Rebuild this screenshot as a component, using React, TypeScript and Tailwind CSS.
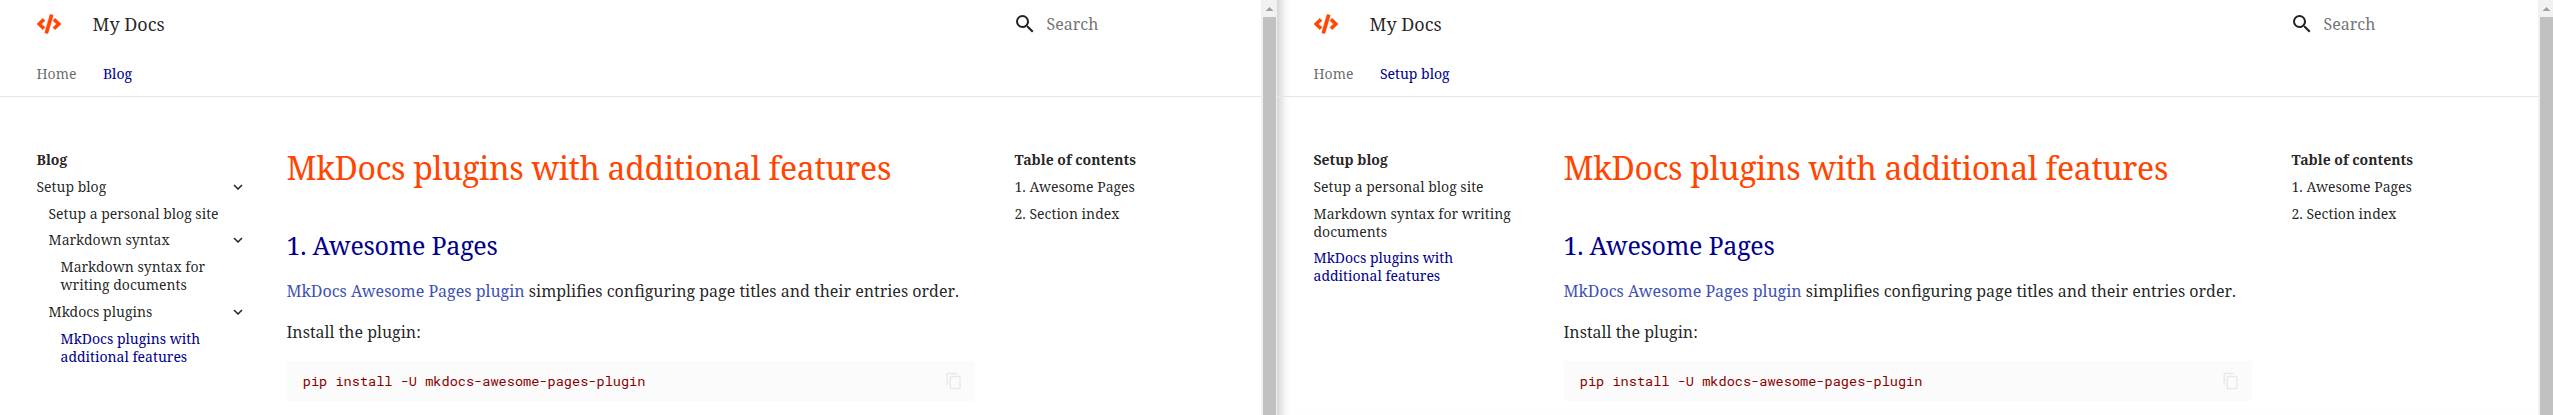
type Item = { label: string; level?: number; open?: boolean; active?: boolean };

type PanelProps = { section: string; items: Item[] };

function Logo() {
  return (
    <svg viewBox="0 0 640 512" className="h-6 w-6 fill-[#ff4500] stroke-[#ff4500] stroke-[12]">
      <path d="m278.900 511.500-61-17.700c-6.400-1.800-10-8.500-8.200-14.900L346.200 8.700c1.800-6.400 8.500-10 14.900-8.200l61 17.700c6.400 1.800 10 8.500 8.200 14.900L293.800 503.300c-1.900 6.400-8.500 10.100-14.900 8.200zm-114-112.200 43.500-46.400c4.600-4.900 4.300-12.700-.8-17.200L117 256l90.600-79.700c5.100-4.500 5.500-12.300.8-17.200l-43.500-46.400c-4.500-4.800-12.100-5.100-17-.5L3.800 247.200c-5.100 4.700-5.100 12.800 0 17.500l144.100 135.100c4.900 4.600 12.500 4.400 17-.5zm327.200.6 144.100-135.100c5.100-4.700 5.100-12.800 0-17.500L492.100 112.100c-4.800-4.500-12.400-4.300-17 .5L431.600 159c-4.600 4.900-4.300 12.700.8 17.200L523 256l-90.600 79.700c-5.100 4.500-5.500 12.300-.8 17.200l43.500 46.400c4.500 4.900 12.100 5.100 17 .6z" />
    </svg>
  );
}

function Header({ section }: { section: string }) {
  return (
    <header className="h-[97px] border-b border-[#e6e6e6]">
      <div className="flex h-12 items-center pl-[37px] text-[18px] text-black/87">
        <Logo />
        <span className="ml-[31.500px] grow">My Docs</span>
        <div className="flex w-[248px] items-center">
          <svg viewBox="0 0 24 24" className="h-6 w-6 fill-black/87">
            <path d="M9.500 3A6.500 6.500 0 0 1 16 9.500c0 1.610-.590 3.090-1.560 4.230l.270.270h.790l5 5-1.500 1.500-5-5v-.790l-.270-.270A6.516 6.516 0 0 1 9.500 16 6.500 6.500 0 0 1 3 9.500 6.500 6.500 0 0 1 9.500 3m0 2C7 5 5 7 5 9.500S7 14 9.500 14 14 12 14 9.500 12 5 9.500 5Z" />
          </svg>
          <span className="ml-[9.500px] text-base text-[#757575]">Search</span>
        </div>
      </div>
      <nav className="flex h-12 items-center gap-[26.500px] pt-[3px] pl-[36.5px] text-sm">
        <a className="text-black/60">Home</a>
        <a className="text-[#00008b]">{section}</a>
      </nav>
    </header>
  );
}

function Chevron() {
  return (
    <svg viewBox="0 0 24 24" className="h-[18px] w-[18px] shrink-0 rotate-90 fill-black/87">
      <path d="M8.590 16.580 13.170 12 8.590 7.410 10 6l6 6-6 6-1.410-1.420Z" />
    </svg>
  );
}

const indents = ["pl-0", "pl-3", "pl-6"];

function Sidebar({ section, items }: PanelProps) {
  return (
    <nav className="w-[210px] pt-[54.1px] text-sm leading-[18px] text-black/87">
      <div className="font-bold">{section}</div>
      <ul>
        {items.map((item) => (
          <li key={item.label} className={`mt-[8.75px] flex items-center justify-between ${indents[item.level ?? 0]}`}>
            <span className={item.active ? "max-w-[160px] text-[#00008b]" : ""}>{item.label}</span>
            {item.open && <Chevron />}
          </li>
        ))}
      </ul>
    </nav>
  );
}

function Article() {
  return (
    <article className="ml-10 w-[688px] pt-[50px] text-base leading-[25.6px] text-black/87">
      <h1 className="text-[32px] leading-[41.6px] tracking-[-0.01em] text-[#ff4500]">MkDocs plugins with additional features</h1>
      <h2 className="mt-[39px] text-[25px] leading-[35px] tracking-[-0.01em] text-[#00008b]">1. Awesome Pages</h2>
      <p className="mt-4">
        <a className="text-[#4051b5]">MkDocs Awesome Pages plugin</a> simplifies configuring page titles and their entries{" "}
        <span className="[font-kerning:none]">order.</span>
      </p>
      <p className="mt-[15.4px]">Install the plugin:</p>
      <div className="mt-4 flex h-10 items-center justify-between rounded-xs bg-[#fbfbfb] pr-[11.500px] pl-4">
        <code className="pt-0.5 pl-[0.3px] font-['Roboto_Mono','DejaVu_Sans_Mono',monospace] text-[13.6px] text-[#8b0000]">pip install -U mkdocs-awesome-pages-plugin</code>
        <svg viewBox="0 0 24 24" className="h-[18px] w-[18px] fill-black/7">
          <path d="M19 21H8V7h11m0-2H8a2 2 0 0 0-2 2v14a2 2 0 0 0 2 2h11a2 2 0 0 0 2-2V7a2 2 0 0 0-2-2m-3-4H4a2 2 0 0 0-2 2v14h2V3h12V1Z" />
        </svg>
      </div>
    </article>
  );
}

function Contents() {
  return (
    <nav className="ml-10 pt-[54.1px] text-sm leading-[18px] text-black/87">
      <div className="font-bold">Table of contents</div>
      <div className="mt-[8.75px]">1. Awesome Pages</div>
      <div className="mt-[8.75px]">2. Section index</div>
    </nav>
  );
}

function Scrollbar() {
  return (
    <div className="flex w-4 shrink-0 flex-col items-center bg-[#f1f1f1]">
      <div className="flex h-[17px] items-center pt-px">
        <svg viewBox="0 0 7 4" className="ml-px h-1 w-[7px] fill-[#a3a3a3]">
          <path d="M0 4V3h1V2h1V1h1V0h1v1h1v1h1v1h1v1Z" />
        </svg>
      </div>
      <div className="ml-px w-[13px] grow bg-[#c1c1c1]" />
    </div>
  );
}

function Panel({ section, items }: PanelProps) {
  return (
    <>
      <div className="w-[1261px] shrink-0">
        <Header section={section} />
        <main className="flex pl-[36.500px]">
          <Sidebar section={section} items={items} />
          <Article />
          <Contents />
        </main>
      </div>
      <Scrollbar />
    </>
  );
}

const blogItems: Item[] = [
  { label: "Setup blog", open: true },
  { label: "Setup a personal blog site", level: 1 },
  { label: "Markdown syntax", level: 1, open: true },
  { label: "Markdown syntax for writing documents", level: 2 },
  { label: "Mkdocs plugins", level: 1, open: true },
  { label: "MkDocs plugins with additional features", level: 2, active: true },
];

const setupItems: Item[] = [
  { label: "Setup a personal blog site" },
  { label: "Markdown syntax for writing documents" },
  { label: "MkDocs plugins with additional features", active: true },
];

export default function App() {
  return (
    <div className="flex h-[415px] w-[2553px] overflow-hidden bg-white font-['Noto_Serif','Liberation_Serif',serif]">
      <Panel section="Blog" items={blogItems} />
      <div className="flex shadow-[inset_12px_0_10px_-8px_rgba(0,0,0,0.2)]">
        <Panel section="Setup blog" items={setupItems} />
      </div>
    </div>
  );
}
